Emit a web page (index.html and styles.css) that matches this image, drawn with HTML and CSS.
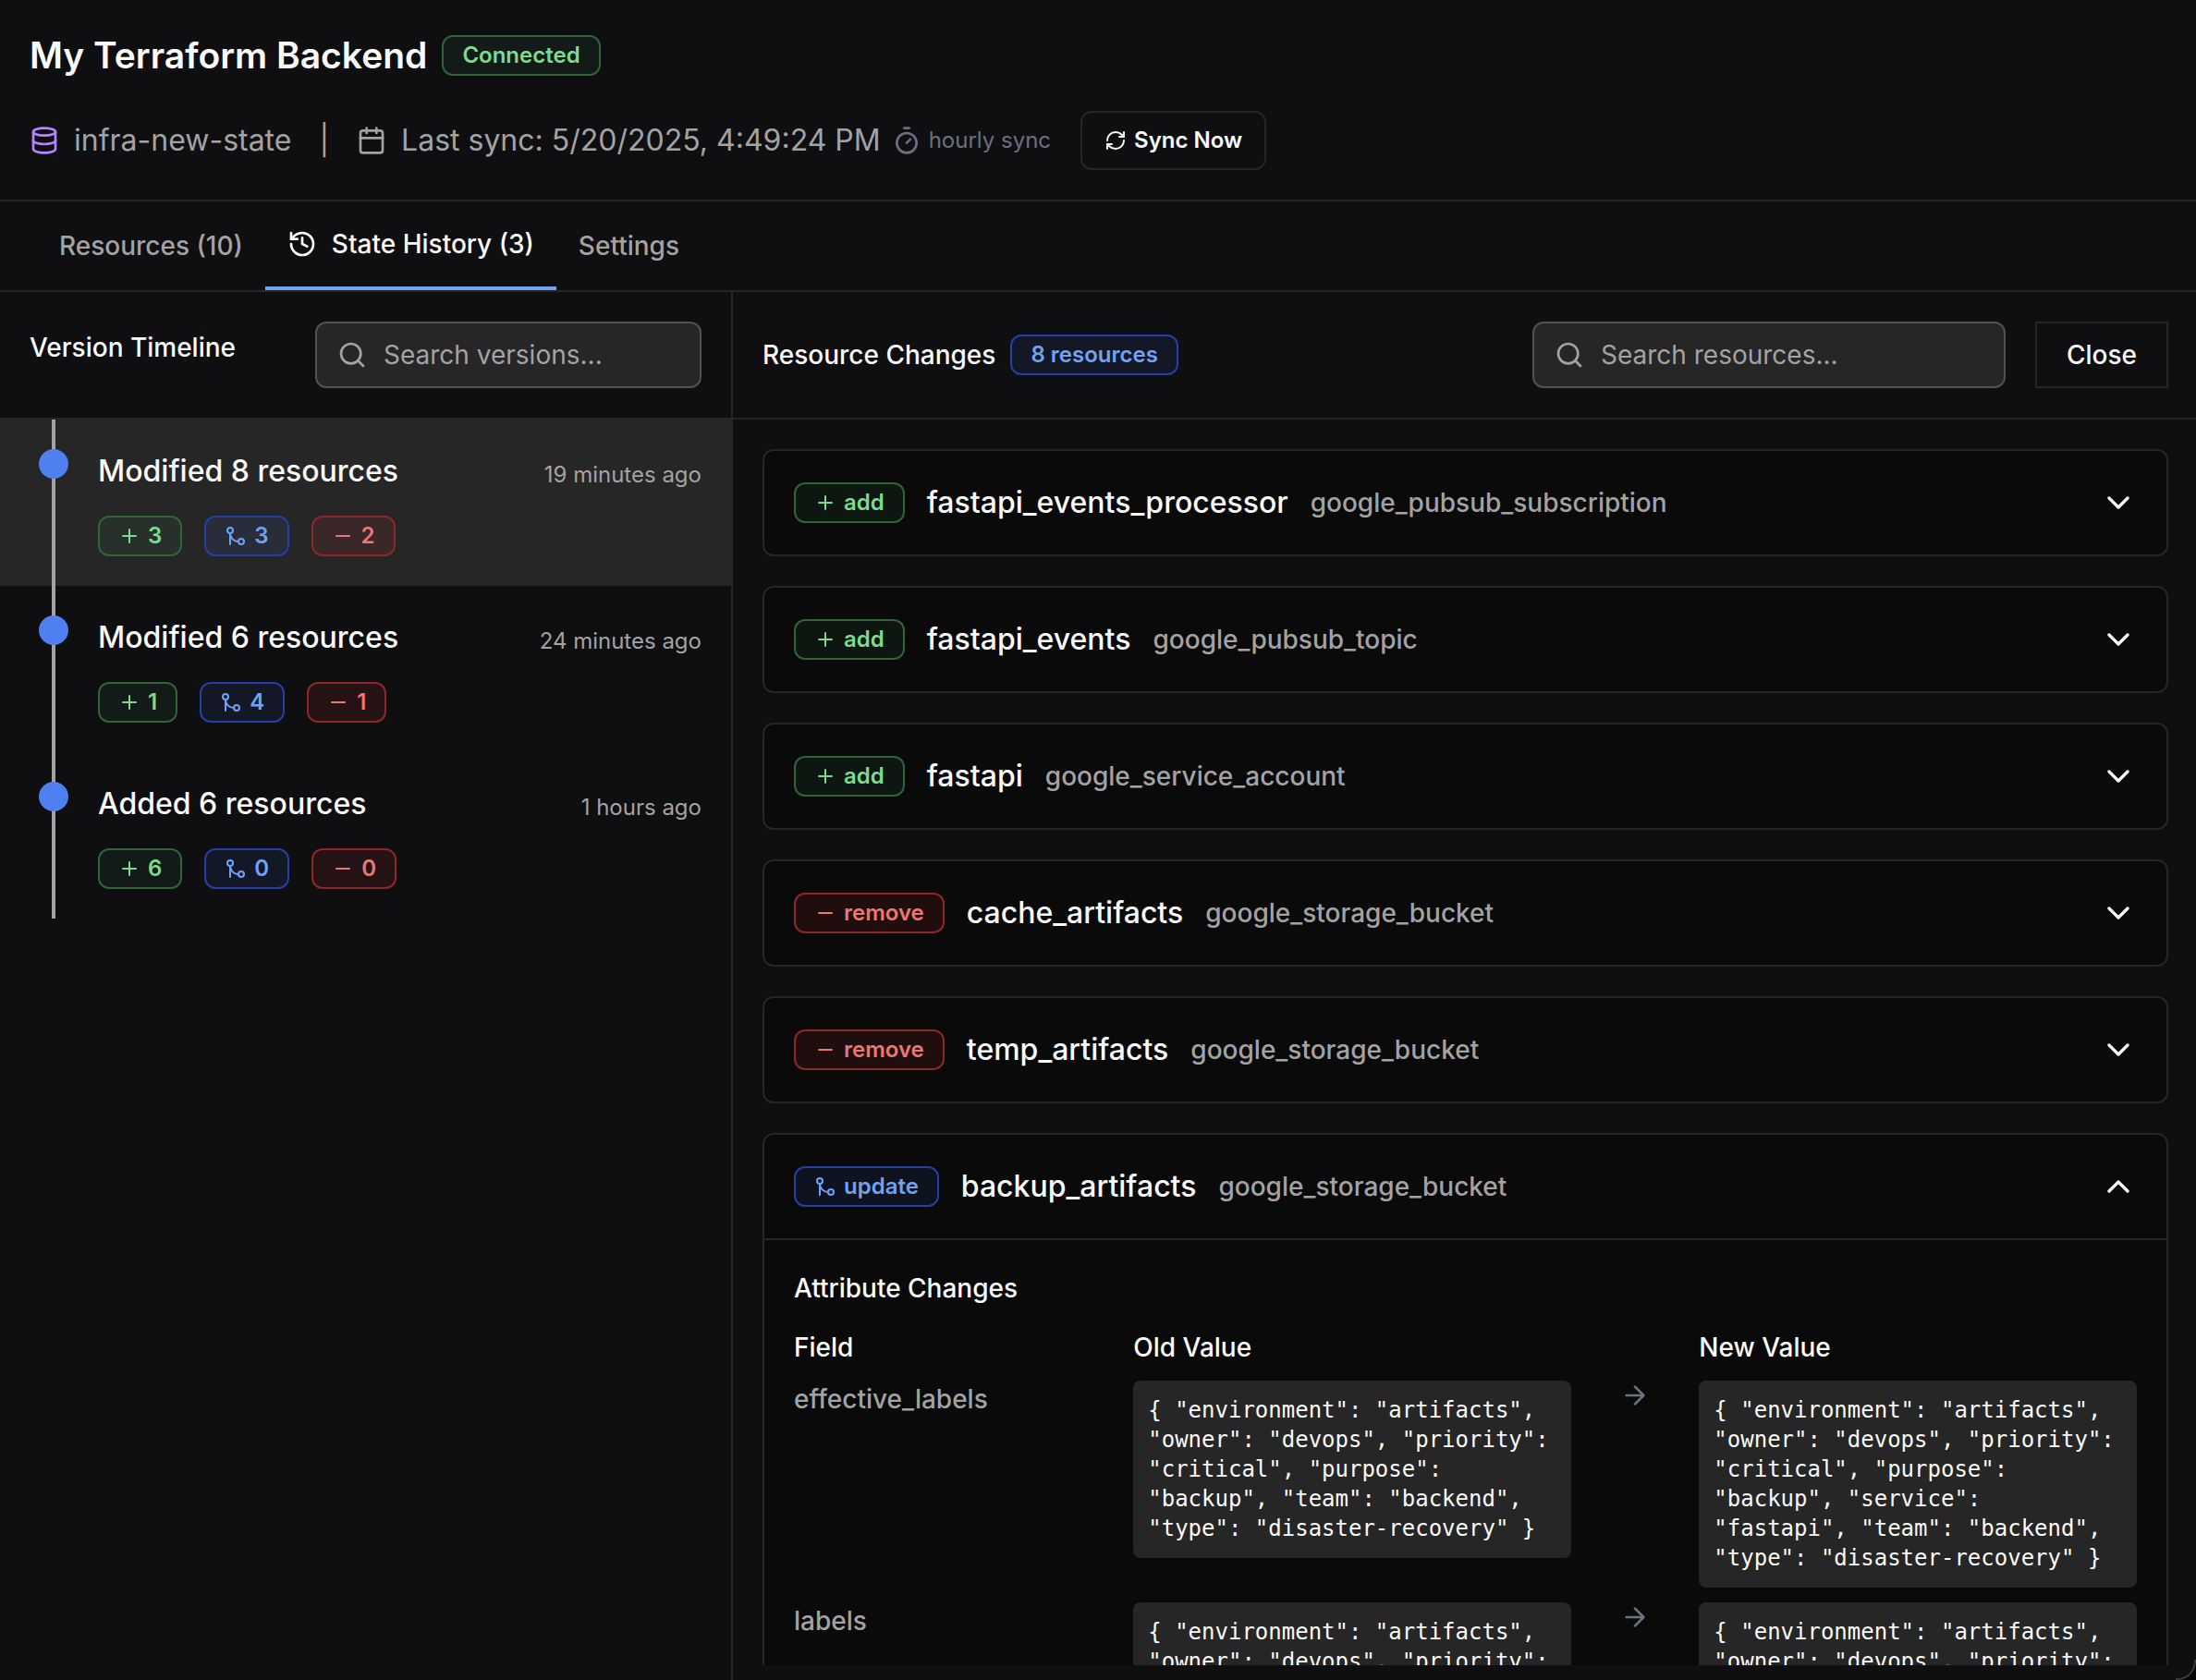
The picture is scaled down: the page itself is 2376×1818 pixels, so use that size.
FILE: index.html
```html
<!DOCTYPE html>
<html lang="en">
<head>
  <meta charset="UTF-8">
  <title>My Terraform Backend</title>
  <link rel="stylesheet" href="styles.css">
</head>
<body>
  <svg class="sprite" aria-hidden="true">
    <symbol id="plus" viewBox="0 0 24 24"><path d="M5 12h14M12 5v14"/></symbol>
    <symbol id="minus" viewBox="0 0 24 24"><path d="M5 12h14"/></symbol>
    <symbol id="merge" viewBox="0 0 24 24"><circle cx="18" cy="18" r="3"/><circle cx="6" cy="6" r="3"/><path d="M6 21V9a9 9 0 0 0 9 9"/></symbol>
    <symbol id="search" viewBox="0 0 24 24"><circle cx="11" cy="11" r="8"/><path d="m21 21-4.3-4.3"/></symbol>
    <symbol id="chevron-down" viewBox="0 0 24 24"><path d="m6 9 6 6 6-6"/></symbol>
    <symbol id="chevron-up" viewBox="0 0 24 24"><path d="m18 15-6-6-6 6"/></symbol>
    <symbol id="arrow-right" viewBox="0 0 24 24"><path d="M5 12h14M12 5l7 7-7 7"/></symbol>
    <symbol id="database" viewBox="0 0 24 24"><ellipse cx="12" cy="5" rx="9" ry="3"/><path d="M3 5v14a9 3 0 0 0 18 0V5"/><path d="M3 12a9 3 0 0 0 18 0"/></symbol>
    <symbol id="calendar" viewBox="0 0 24 24"><path d="M8 2v4M16 2v4"/><rect x="3" y="4" width="18" height="18" rx="2"/><path d="M3 10h18"/></symbol>
    <symbol id="timer" viewBox="0 0 24 24"><path d="M10 2h4M12 14l3-3"/><circle cx="12" cy="14" r="8"/></symbol>
    <symbol id="refresh" viewBox="0 0 24 24"><path d="M3 12a9 9 0 0 1 9-9 9.75 9.75 0 0 1 6.74 2.74L21 8"/><path d="M21 3v5h-5"/><path d="M21 12a9 9 0 0 1-9 9 9.75 9.75 0 0 1-6.74-2.74L3 16"/><path d="M8 16H3v5"/></symbol>
    <symbol id="history" viewBox="0 0 24 24"><path d="M3 12a9 9 0 1 0 9-9 9.75 9.75 0 0 0-6.74 2.74L3 8"/><path d="M3 3v5h5"/><path d="M12 7v5l4 2"/></symbol>
  </svg>

  <div class="app">
    <header class="page-header">
      <div class="title-row">
        <h1>My Terraform Backend</h1>
        <span class="badge green">Connected</span>
      </div>
      <div class="meta-row">
        <span class="meta-item"><svg class="icon purple"><use href="#database"/></svg>infra-new-state</span>
        <span class="meta-divider">|</span>
        <span class="meta-item"><svg class="icon"><use href="#calendar"/></svg>Last sync: 5/20/2025, 4:49:24 PM</span>
        <span class="sync-interval"><svg class="icon"><use href="#timer"/></svg>hourly sync</span>
        <button type="button" class="sync-button"><svg class="icon small"><use href="#refresh"/></svg>Sync Now</button>
      </div>
    </header>

    <nav class="tabs">
      <a href="#resources" class="tab">Resources (10)</a>
      <a href="#history-tab" class="tab active" aria-current="page"><svg class="icon"><use href="#history"/></svg>State History (3)</a>
      <a href="#settings" class="tab">Settings</a>
    </nav>

    <main class="panels">
      <section class="timeline-panel">
        <div class="panel-header timeline-header">
          <h2>Version Timeline</h2>
          <label class="search-box">
            <svg class="icon"><use href="#search"/></svg>
            <input type="text" placeholder="Search versions..." aria-label="Search versions">
          </label>
        </div>
        <ol class="versions">
          <li class="version selected">
            <div class="version-top"><h3>Modified 8 resources</h3><time>19 minutes ago</time></div>
            <div class="counts">
              <span class="badge green"><svg class="icon small"><use href="#plus"/></svg>3</span>
              <span class="badge blue"><svg class="icon small"><use href="#merge"/></svg>3</span>
              <span class="badge red"><svg class="icon small"><use href="#minus"/></svg>2</span>
            </div>
          </li>
          <li class="version">
            <div class="version-top"><h3>Modified 6 resources</h3><time>24 minutes ago</time></div>
            <div class="counts">
              <span class="badge green"><svg class="icon small"><use href="#plus"/></svg>1</span>
              <span class="badge blue"><svg class="icon small"><use href="#merge"/></svg>4</span>
              <span class="badge red"><svg class="icon small"><use href="#minus"/></svg>1</span>
            </div>
          </li>
          <li class="version">
            <div class="version-top"><h3>Added 6 resources</h3><time>1 hours ago</time></div>
            <div class="counts">
              <span class="badge green"><svg class="icon small"><use href="#plus"/></svg>6</span>
              <span class="badge blue"><svg class="icon small"><use href="#merge"/></svg>0</span>
              <span class="badge red"><svg class="icon small"><use href="#minus"/></svg>0</span>
            </div>
          </li>
        </ol>
      </section>

      <section class="changes-panel">
        <div class="panel-header">
          <h2>Resource Changes</h2>
          <span class="badge blue">8 resources</span>
          <label class="search-box wide">
            <svg class="icon"><use href="#search"/></svg>
            <input type="text" placeholder="Search resources..." aria-label="Search resources">
          </label>
          <button type="button" class="close-button">Close</button>
        </div>
        <div class="changes">
          <article class="card">
            <button type="button" class="card-header" aria-expanded="false">
              <span class="badge green"><svg class="icon small"><use href="#plus"/></svg>add</span>
              <span class="name">fastapi_events_processor</span>
              <span class="type">google_pubsub_subscription</span>
              <svg class="icon large"><use href="#chevron-down"/></svg>
            </button>
          </article>
          <article class="card">
            <button type="button" class="card-header" aria-expanded="false">
              <span class="badge green"><svg class="icon small"><use href="#plus"/></svg>add</span>
              <span class="name">fastapi_events</span>
              <span class="type">google_pubsub_topic</span>
              <svg class="icon large"><use href="#chevron-down"/></svg>
            </button>
          </article>
          <article class="card">
            <button type="button" class="card-header" aria-expanded="false">
              <span class="badge green"><svg class="icon small"><use href="#plus"/></svg>add</span>
              <span class="name">fastapi</span>
              <span class="type">google_service_account</span>
              <svg class="icon large"><use href="#chevron-down"/></svg>
            </button>
          </article>
          <article class="card">
            <button type="button" class="card-header" aria-expanded="false">
              <span class="badge red"><svg class="icon small"><use href="#minus"/></svg>remove</span>
              <span class="name">cache_artifacts</span>
              <span class="type">google_storage_bucket</span>
              <svg class="icon large"><use href="#chevron-down"/></svg>
            </button>
          </article>
          <article class="card">
            <button type="button" class="card-header" aria-expanded="false">
              <span class="badge red"><svg class="icon small"><use href="#minus"/></svg>remove</span>
              <span class="name">temp_artifacts</span>
              <span class="type">google_storage_bucket</span>
              <svg class="icon large"><use href="#chevron-down"/></svg>
            </button>
          </article>
          <article class="card">
            <button type="button" class="card-header" aria-expanded="true">
              <span class="badge blue"><svg class="icon small"><use href="#merge"/></svg>update</span>
              <span class="name">backup_artifacts</span>
              <span class="type">google_storage_bucket</span>
              <svg class="icon large"><use href="#chevron-up"/></svg>
            </button>
            <div class="card-body">
              <h3>Attribute Changes</h3>
              <table class="diff">
                <thead>
                  <tr><th>Field</th><th>Old Value</th><th></th><th>New Value</th></tr>
                </thead>
                <tbody>
                  <tr>
                    <td>effective_labels</td>
                    <td><code>{ "environment": "artifacts", "owner": "devops", "priority": "critical", "purpose": "backup", "team": "backend", "type": "disaster-recovery" }</code></td>
                    <td><svg class="icon"><use href="#arrow-right"/></svg></td>
                    <td><code>{ "environment": "artifacts", "owner": "devops", "priority": "critical", "purpose": "backup", "service": "fastapi", "team": "backend", "type": "disaster-recovery" }</code></td>
                  </tr>
                  <tr>
                    <td>labels</td>
                    <td><code>{ "environment": "artifacts", "owner": "devops", "priority": "critical", "purpose": "backup", "team": "backend", "type": "disaster-recovery" }</code></td>
                    <td><svg class="icon"><use href="#arrow-right"/></svg></td>
                    <td><code>{ "environment": "artifacts", "owner": "devops", "priority": "critical", "purpose": "backup", "service": "fastapi", "team": "backend", "type": "disaster-recovery" }</code></td>
                  </tr>
                </tbody>
              </table>
            </div>
          </article>
        </div>
      </section>
    </main>
  </div>
</body>
</html>
```

FILE: styles.css
```css
* {
  box-sizing: border-box;
}
body {
  margin: 0;
  background: #060608;
  color: #fafafa;
  font-family: Inter, "Liberation Sans", sans-serif;
  font-size: 28px;
  line-height: 40px;
}
h1, h2, h3, ol {
  margin: 0;
  padding: 0;
}
h2, h3 {
  font-size: 28px;
  font-weight: 500;
}
button, input {
  font: inherit;
  color: inherit;
}
.sprite {
  display: none;
}
.app {
  position: relative;
  display: flex;
  flex-direction: column;
  height: 100vh;
  border-bottom-right-radius: 20px;
  background: #0f0f11;
  overflow: hidden;
}
/* window corner */
.app::after {
  content: "";
  position: absolute;
  right: 0;
  bottom: 0;
  width: 20px;
  height: 20px;
  border: solid #3c3c3e;
  border-width: 0 2px 2px 0;
  border-bottom-right-radius: 20px;
}

/* icons */
.icon {
  flex: none;
  width: 32px;
  height: 32px;
  fill: none;
  stroke: currentColor;
  stroke-width: 2;
  stroke-linecap: round;
  stroke-linejoin: round;
}
.icon.small {
  width: 24px;
  height: 24px;
}
.icon.large {
  width: 40px;
  height: 40px;
}
.purple {
  color: #b583fc;
}

/* badges */
.badge {
  display: inline-flex;
  align-items: center;
  gap: 8px;
  padding: 4px 20px;
  border: 2px solid;
  border-radius: 12px;
  font-size: 24px;
  font-weight: 600;
  line-height: 32px;
}
.green {
  color: #7bdc8c;
  border-color: #30653a;
  background: rgba(74, 222, 128, 0.06);
}
.blue {
  color: #6ea3f5;
  border-color: #2440a8;
  background: rgba(70, 100, 230, 0.1);
}
.red {
  color: #ec7672;
  border-color: #8f2824;
  background: rgba(239, 50, 50, 0.1);
}

/* header */
.page-header {
  display: flex;
  flex-direction: column;
  gap: 32px;
  padding: 32px;
  border-bottom: 2px solid #262628;
}
.title-row {
  display: flex;
  align-items: center;
  gap: 16px;
}
h1 {
  font-size: 39px;
  font-weight: 600;
  line-height: 56px;
}
.meta-row {
  display: flex;
  align-items: center;
  color: #a3a3a3;
  font-size: 32px;
  line-height: 48px;
}
.meta-item {
  display: flex;
  align-items: center;
  gap: 16px;
}
.meta-divider {
  margin: 0 30px;
}
.sync-interval {
  display: flex;
  align-items: center;
  gap: 8px;
  margin: 0 32px 0 12px;
  color: #6b7080;
  font-size: 24px;
}
.sync-button {
  display: flex;
  align-items: center;
  gap: 8px;
  height: 64px;
  padding: 0 24px;
  border: 2px solid #262626;
  border-radius: 12px;
  background: none;
  color: #fafafa;
  font-size: 24px;
  font-weight: 600;
}

/* tabs */
.tabs {
  display: flex;
  padding: 0 40px;
  border-bottom: 2px solid #262628;
}
.tab {
  display: flex;
  align-items: center;
  gap: 16px;
  height: 96px;
  padding: 0 24px;
  color: #a3a3a3;
  font-weight: 500;
  text-decoration: none;
}
.tab.active {
  border-bottom: 4px solid #6ea3f5;
  color: #fafafa;
}

/* panels */
.panels {
  display: grid;
  grid-template-columns: calc(100% / 3 + 1px) 1fr;
  flex: 1;
  min-height: 0;
}
.timeline-panel {
  border-right: 2px solid #262628;
}
.changes-panel {
  display: flex;
  flex-direction: column;
  min-width: 0;
  min-height: 0;
  padding-bottom: 16px;
}
.panel-header {
  display: flex;
  flex: none;
  align-items: center;
  gap: 16px;
  padding: 32px 30px 32px 32px;
  border-bottom: 2px solid #262628;
}
.timeline-header {
  align-items: flex-start;
  justify-content: space-between;
  padding-right: 32px;
}
.timeline-header h2 {
  line-height: 56px;
}
.search-box {
  display: flex;
  align-items: center;
  gap: 18px;
  width: 418px;
  height: 72px;
  padding: 0 22px;
  border: 2px solid #525252;
  border-radius: 12px;
  background: #262626;
  color: #a3a3a3;
}
.search-box.wide {
  width: 512px;
  margin: 0 16px 0 auto;
}
.search-box input {
  flex: 1;
  min-width: 0;
  padding: 0;
  border: 0;
  outline: 0;
  background: none;
}
.search-box input::placeholder {
  color: #a3a3a3;
  opacity: 1;
}
.close-button {
  height: 72px;
  padding: 0 32px;
  border: 2px solid #262626;
  background: none;
  font-weight: 500;
}

/* version timeline */
.versions {
  position: relative;
  list-style: none;
}
.versions::before {
  content: "";
  position: absolute;
  top: 0;
  bottom: 0;
  left: 56px;
  width: 4px;
  background: #a3a3a3;
}
.version {
  display: flex;
  flex-direction: column;
  gap: 24px;
  padding: 32px 32px 32px 106px;
}
.version.selected {
  background: #262626;
}
.version::before {
  content: "";
  position: absolute;
  left: 42px;
  width: 32px;
  height: 32px;
  border-radius: 50%;
  background: #4f80f0;
}
.version-top {
  display: flex;
  align-items: flex-end;
  justify-content: space-between;
}
.version-top h3 {
  font-size: 32px;
  line-height: 48px;
}
.version-top time {
  color: #a3a3a3;
  font-size: 24px;
}
.counts {
  display: flex;
  gap: 24px;
}

/* resource changes */
.changes {
  display: flex;
  flex-direction: column;
  gap: 32px;
  min-height: 0;
  padding: 32px 30px 0 32px;
  overflow: hidden;
}
.card {
  flex: none;
  border: 2px solid #262626;
  border-radius: 12px;
  background: #0a0a0a;
}
.card-header {
  display: flex;
  align-items: center;
  gap: 24px;
  width: 100%;
  height: 112px;
  padding: 0 32px;
  border: 0;
  background: none;
}
.card-header .icon.large {
  margin-left: auto;
}
.name {
  font-size: 32px;
  font-weight: 500;
}
.type {
  color: #a3a3a3;
  font-weight: 500;
}
.card-body {
  padding: 32px;
  border-top: 2px solid #262626;
}
.diff,
.diff thead,
.diff tbody {
  display: block;
}
.diff {
  margin-top: 24px;
}
.diff tr {
  display: grid;
  grid-template-columns: repeat(12, 1fr);
  gap: 16px;
  margin-bottom: 16px;
}
.diff th,
.diff td {
  padding: 0;
  font-weight: 500;
  text-align: left;
}
.diff td {
  color: #a3a3a3;
}
.diff tr > :nth-child(1) {
  grid-column: span 3;
}
.diff tr > :nth-child(2),
.diff tr > :nth-child(4) {
  grid-column: span 4;
}
.diff td:nth-child(3) {
  color: #6b7280;
}
.diff td .icon {
  display: block;
  margin: 0 auto;
}
code {
  display: block;
  padding: 16px;
  border-radius: 8px;
  background: #262626;
  color: #fafafa;
  font-family: "DejaVu Sans Mono", monospace;
  font-size: 24px;
  font-weight: 400;
  line-height: 32px;
}
```
